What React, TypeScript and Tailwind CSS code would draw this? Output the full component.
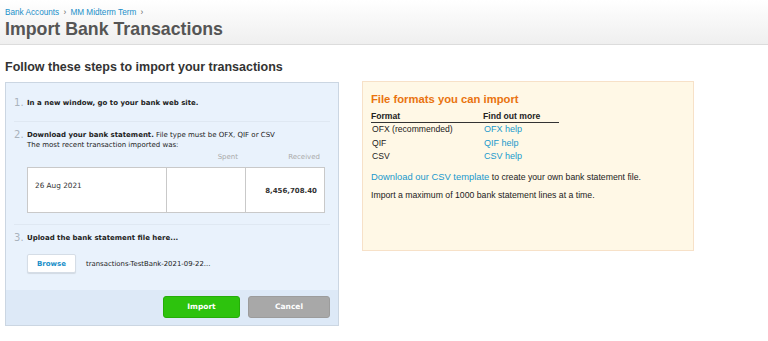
import React from "react";

const verdana = { fontFamily: '"DejaVu Sans", Verdana, sans-serif' };

const formats = [
  { name: "OFX (recommended)", help: "OFX help" },
  { name: "QIF", help: "QIF help" },
  { name: "CSV", help: "CSV help" },
];

// ---------------- STEP ----------------
function Step({
  num,
  children,
}: {
  num: number;
  children: React.ReactNode;
}) {
  return (
    <div className="flex text-[7px] leading-[10px]">
      <span className="w-[13px] text-[10px] leading-[12px] text-[#a9b3bd]">
        {num}.
      </span>
      <div className="flex-1">{children}</div>
    </div>
  );
}

const App = () => {
  return (
    <div className="w-[768px] h-[341px] bg-white font-['Liberation_Sans',Arial,sans-serif] overflow-hidden">
      {/* header */}
      <div className="h-[45px] bg-gradient-to-b from-white to-[#efefef] border-b border-[#dcdcdc] px-[5px] pt-[8px]">
        <div className="text-[8.2px] leading-[10px] text-[#1a8fc9]">
          Bank Accounts <span className="text-[#666] mx-[2px]">›</span> MM
          Midterm Term <span className="text-[#666] mx-[2px]">›</span>
        </div>
        <h1 className="text-[17.75px] leading-[22px] font-bold text-[#555]">
          Import Bank Transactions
        </h1>
      </div>

      <h2 className="px-[5px] mt-[15px] text-[12.5px] leading-[14px] font-bold text-[#333]">
        Follow these steps to import your transactions
      </h2>

      <div className="flex items-start px-[5px] mt-[8px] gap-[23px]">
        {/* left steps panel */}
        <div
          className="w-[334px] h-[244px] bg-[#e9f2fc] border border-[#cbd6e2] flex flex-col text-[#222]"
          style={verdana}
        >
          <div className="flex-1 px-[8px]">
            <div className="pt-[14px] pb-[12px] border-b border-[#dfe8f2]">
              <Step num={1}>
                <div className="leading-[12px] font-bold">
                  In a new window, go to your bank web site.
                </div>
              </Step>
            </div>

            <div className="pt-[7px] pb-[11px] border-b border-[#dfe8f2]">
              <Step num={2}>
                <div className="pt-[1px]">
                  <span className="font-bold">Download your bank statement.</span>{" "}
                  File type must be OFX, QIF or CSV
                  <br />
                  The most recent transaction imported was:
                </div>
                <div className="flex text-[#aaa] mt-[2px] pr-[10px]">
                  <span className="w-[139px]"></span>
                  <span className="w-[72px] text-right">Spent</span>
                  <span className="flex-1 text-right">Received</span>
                </div>
                <div className="flex h-[46px] mt-[5px] mr-[5px] bg-white border border-[#c9c9c9]">
                  <div className="w-[139px] border-r border-[#c9c9c9] pl-[7px] pt-[13px] text-[7.3px] text-[#333]">
                    26 Aug 2021
                  </div>
                  <div className="w-[79px] border-r border-[#c9c9c9]"></div>
                  <div className="flex-1 text-right pr-[7px] pt-[18px] font-bold text-[#333]">
                    8,456,708.40
                  </div>
                </div>
              </Step>
            </div>

            <div className="pt-[7px]">
              <Step num={3}>
                <div className="leading-[12px] font-bold">
                  Upload the bank statement file here...
                </div>
                <div className="flex items-center mt-[10px] gap-[10px]">
                  <button className="w-[49px] h-[19px] bg-white border border-[#d5dde6] rounded-[2px] shadow-[0_1px_1px_rgba(0,0,0,0.1)] text-[7px] font-bold text-[#1a8fc9]">
                    Browse
                  </button>
                  <span className="text-[6.9px] text-[#222]">
                    transactions-TestBank-2021-09-22...
                  </span>
                </div>
              </Step>
            </div>
          </div>

          <div className="h-[35px] bg-[#dde9f7] flex items-center justify-end gap-[8px] pr-[8px] pb-[2px]">
            <button className="w-[77px] h-[22px] rounded-[3px] bg-[#2dc30d] border border-[#25ad08] text-white text-[7.5px] font-bold">
              Import
            </button>
            <button className="w-[82px] h-[22px] rounded-[3px] bg-[#a8a8a8] border border-[#9c9c9c] text-white text-[7.5px] font-bold">
              Cancel
            </button>
          </div>
        </div>

        {/* right formats panel */}
        <div className="w-[332px] h-[170px] -mt-[1px] bg-[#fff8e6] border border-[#f7e1c8] px-[8px] pt-[10px] text-[#222]">
          <h3 className="text-[11.25px] leading-[14px] font-bold text-[#e9730f]">
            File formats you can import
          </h3>
          <div className="w-[188px] mt-[5px] text-[8.6px]">
            <div className="flex font-bold border-b border-[#333] leading-[11px]">
              <span className="w-[112px]">Format</span>
              <span>Find out more</span>
            </div>
            {formats.map((f) => (
              <div key={f.name} className="flex leading-[13.5px]">
                <span className="w-[113px] pl-[1px]">{f.name}</span>
                <span className="text-[9px] text-[#1a98cc]">{f.help}</span>
              </div>
            ))}
          </div>
          <p className="mt-[7px] text-[8.7px] leading-[12px]">
            <span className="text-[9.4px] text-[#1a98cc]">
              Download our CSV template
            </span>{" "}
            to create your own bank statement file.
          </p>
          <p className="mt-[6px] text-[8.7px] leading-[12px]">
            Import a maximum of 1000 bank statement lines at a time.
          </p>
        </div>
      </div>
    </div>
  );
};

export default App;
